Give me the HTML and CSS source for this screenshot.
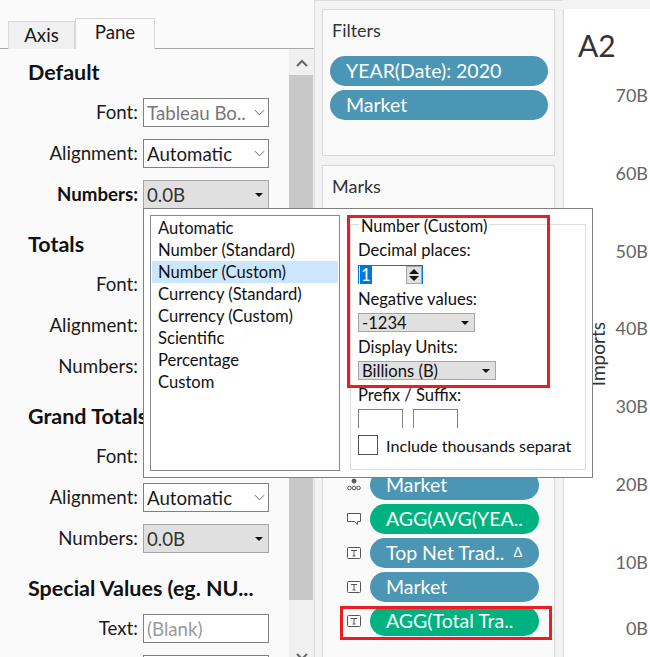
FILE: index.html
```html
<!DOCTYPE html>
<html lang="en">
<head>
  <meta charset="UTF-8" />
  <meta name="viewport" content="width=device-width, initial-scale=1.0" />
  <title>Format Pane</title>
  <link rel="stylesheet" href="styles.css">
</head>
<body>
  <aside class="pane">
    <div class="tabs">
      <div class="tab">Axis</div>
      <div class="tab tab-active">Pane</div>
    </div>
    <div class="pane-body">
      <div class="pane-form">
        <section class="group">
          <h2>Default</h2>
          <div class="row"><span class="row-label">Font:</span><div class="field field-muted">Tableau Bo..<svg class="chev" viewBox="0 0 12 7"><path d="M1 1l5 5 5-5"/></svg></div></div>
          <div class="row"><span class="row-label">Alignment:</span><div class="field">Automatic<svg class="chev" viewBox="0 0 12 7"><path d="M1 1l5 5 5-5"/></svg></div></div>
          <div class="row"><span class="row-label row-bold">Numbers:</span><div class="field field-combo">0.0B<i class="caret"></i></div></div>
        </section>
        <section class="group">
          <h2>Totals</h2>
          <div class="row"><span class="row-label">Font:</span><div class="field"></div></div>
          <div class="row"><span class="row-label">Alignment:</span><div class="field"></div></div>
          <div class="row"><span class="row-label">Numbers:</span><div class="field field-combo"></div></div>
        </section>
        <section class="group">
          <h2>Grand Totals</h2>
          <div class="row"><span class="row-label">Font:</span><div class="field"></div></div>
          <div class="row"><span class="row-label">Alignment:</span><div class="field">Automatic<svg class="chev" viewBox="0 0 12 7"><path d="M1 1l5 5 5-5"/></svg></div></div>
          <div class="row"><span class="row-label">Numbers:</span><div class="field field-combo">0.0B<i class="caret"></i></div></div>
        </section>
        <section class="group">
          <h2>Special Values (eg. NU...</h2>
          <div class="row"><span class="row-label">Text:</span><div class="field field-hint">(Blank)</div></div>
          <div class="row"><span class="row-label"></span><div class="field"></div></div>
        </section>
      </div>
      <div class="scrollbar">
        <svg class="scroll-arrow" viewBox="0 0 12 8"><path d="M1 7l5-5 5 5"/></svg>
        <div class="scroll-thumb"></div>
        <svg class="scroll-arrow" viewBox="0 0 12 8"><path d="M1 1l5 5 5-5"/></svg>
      </div>
    </div>
  </aside>

  <div class="cards">
    <section class="card card-filters">
      <h3>Filters</h3>
      <div class="pill pill-wide">YEAR(Date): 2020</div>
      <div class="pill pill-wide">Market</div>
    </section>
    <section class="card card-marks">
      <h3>Marks</h3>
      <div class="mark-list">
        <div class="mark-row">
          <svg class="mark-icon" viewBox="0 0 14 14"><circle cx="7" cy="3" r="2" fill="#555"/><circle cx="2.5" cy="10" r="1.8"/><circle cx="7" cy="10" r="1.8"/><circle cx="11.5" cy="10" r="1.8"/></svg>
          <div class="pill">Market</div>
        </div>
        <div class="mark-row">
          <svg class="mark-icon" viewBox="0 0 14 14"><path d="M.5 1.5h13v8h-3v3l-3-3h-7z"/></svg>
          <div class="pill pill-green">AGG(AVG(YEA..</div>
        </div>
        <div class="mark-row">
          <svg class="mark-icon" viewBox="0 0 14 14"><rect x=".5" y="1.5" width="13" height="11" rx="1"/><path d="M4 4.5h6M7 4.5v5.5M5.5 10h3"/></svg>
          <div class="pill">Top Net Trad..<span class="delta">Δ</span></div>
        </div>
        <div class="mark-row">
          <svg class="mark-icon" viewBox="0 0 14 14"><rect x=".5" y="1.5" width="13" height="11" rx="1"/><path d="M4 4.5h6M7 4.5v5.5M5.5 10h3"/></svg>
          <div class="pill">Market</div>
        </div>
        <div class="mark-row">
          <svg class="mark-icon" viewBox="0 0 14 14"><rect x=".5" y="1.5" width="13" height="11" rx="1"/><path d="M4 4.5h6M7 4.5v5.5M5.5 10h3"/></svg>
          <div class="pill pill-green">AGG(Total Tra..</div>
          <div class="callout callout-row"></div>
        </div>
      </div>
    </section>
  </div>

  <main class="viz">
    <div class="viz-title">A2</div>
    <div class="axis">
      <span>70B</span>
      <span>60B</span>
      <span>50B</span>
      <span>40B</span>
      <span>30B</span>
      <span>20B</span>
      <span>10B</span>
      <span class="axis-zero">0B</span>
    </div>
    <div class="axis-title">Imports</div>
  </main>

  <div class="popup">
    <ul class="format-list">
      <li>Automatic</li>
      <li>Number (Standard)</li>
      <li class="selected">Number (Custom)</li>
      <li>Currency (Standard)</li>
      <li>Currency (Custom)</li>
      <li>Scientific</li>
      <li>Percentage</li>
      <li>Custom</li>
    </ul>
    <fieldset class="format-opts">
      <legend>Number (Custom)</legend>
      <div class="opt-label opt-first">Decimal places:</div>
      <div class="spin">
        <span class="spin-value">1</span>
        <div class="spin-btns"><i class="tri-up"></i><i class="tri-down"></i></div>
      </div>
      <div class="opt-label">Negative values:</div>
      <div class="mini-combo mini-neg">-1234<i class="caret"></i></div>
      <div class="opt-label">Display Units:</div>
      <div class="mini-combo mini-units">Billions (B)<i class="caret"></i></div>
      <div class="opt-label">Prefix / Suffix:</div>
      <div class="affix"><div class="affix-box"></div><div class="affix-box"></div></div>
      <div class="check-row"><span class="check"></span><span class="check-text">Include thousands separat</span></div>
    </fieldset>
    <div class="callout callout-opts"></div>
  </div>
</body>
</html>
```

FILE: styles.css
```css
* {
  box-sizing: border-box;
}
body {
  margin: 0;
  width: 650px;
  height: 657px;
  overflow: hidden;
  display: flex;
  position: relative;
  background-color: #f3f3f3;
  color: #1a1a1a;
  font-family: Lato, 'Open Sans', sans-serif;
  font-size: 18.7px;
}

/* left format pane */
.pane {
  width: 315px;
  height: 657px;
  flex: none;
  background-color: #fafafa;
  border-right: 1px solid #dcdcdc;
  display: flex;
  flex-direction: column;
}
.tabs {
  height: 49px;
  flex: none;
  padding: 18px 0 0 8px;
  display: flex;
  align-items: flex-end;
  border-bottom: 1px solid #a8a8a8;
}
.tab {
  width: 67px;
  height: 28px;
  margin-bottom: -1px;
  text-align: center;
  line-height: 27px;
  background-color: #f0f0f0;
  border: 1px solid #d9d9d9;
  border-bottom: none;
}
.tab-active {
  width: 80px;
  height: 31px;
  line-height: 26px;
  background-color: #fafafa;
}
.pane-body {
  flex: 1;
  min-height: 0;
  display: flex;
  overflow: hidden;
}
.pane-form {
  width: 289px;
  padding: 9px 0 0 28px;
}
.group {
  margin-bottom: 21px;
}
h2 {
  margin: 0 0 10px;
  height: 30px;
  line-height: 28px;
  font-size: 21.5px;
  font-weight: 700;
  color: #111;
  white-space: nowrap;
}
.row {
  height: 29px;
  margin: 0 0 12px -28px;
  display: flex;
  align-items: center;
}
.row-label {
  width: 138px;
  margin-right: 5px;
  margin-top: -2px;
  text-align: right;
}
.row-bold {
  font-weight: 700;
  color: #111;
}
.field {
  width: 126px;
  height: 29px;
  padding-left: 3px;
  display: flex;
  align-items: center;
  justify-content: space-between;
  background-color: #fff;
  border: 1px solid #808080;
  white-space: nowrap;
}
.field-muted {
  color: #777;
}
.field-hint {
  color: #9a9a9a;
}
.field-combo {
  background-color: #e0e0e0;
  border-color: #a6a6a6;
  color: #333;
}
.chev {
  width: 11px;
  height: 7px;
  margin-right: 3px;
  flex: none;
  fill: none;
  stroke: #555;
  stroke-width: 1;
}
.caret {
  display: block;
  width: 0;
  height: 0;
  margin-right: 5px;
  border-left: 4px solid transparent;
  border-right: 4px solid transparent;
  border-top: 4px solid #111;
}
.scrollbar {
  width: 25px;
  background-color: #f0f0f0;
  display: flex;
  flex-direction: column;
  align-items: center;
}
.scroll-thumb {
  width: 24px;
  height: 525px;
  margin: 0 1px 0 0;
  flex: none;
  background-color: #c8c8c8;
}
.scroll-arrow {
  width: 12px;
  height: 8px;
  margin: 10px 0 8px;
  flex: none;
  fill: none;
  stroke: #666;
  stroke-width: 2;
}
.scroll-thumb + .scroll-arrow {
  margin-top: 53px;
}

/* filters and marks */
.cards {
  width: 248px;
  flex: none;
  padding: 9px 8px 0 7px;
  border-top: 1px solid #dcdcdc;
}
.card {
  background-color: #fafafa;
  border: 1px solid #d8d8d8;
}
.card-filters {
  height: 147px;
  margin: -1px 0 9px;
  padding: 0 6px;
}
.card-marks {
  height: 500px;
  padding: 0 6px;
}
h3 {
  margin: 0;
  padding-left: 3px;
  height: 46px;
  line-height: 41px;
  font-size: 18px;
  font-weight: 400;
  color: #333;
}
.pill {
  height: 30px;
  width: 169px;
  padding: 0 0 2px 16px;
  display: flex;
  align-items: center;
  border-radius: 15px;
  background-color: #4b96b5;
  color: #fff;
  font-size: 19.5px;
  white-space: nowrap;
}
.pill-wide {
  width: 218px;
  margin: 0 0 4px 1px;
}
.pill-green {
  background-color: #00b27f;
}
.delta {
  margin-left: 9px;
  font-size: 13px;
}
.mark-list {
  margin-top: 258px;
  display: flex;
  flex-direction: column;
  gap: 4px;
  margin-left: 18px;
}
.mark-row {
  display: flex;
  align-items: center;
  gap: 9px;
  position: relative;
}
.mark-icon {
  width: 14px;
  height: 14px;
  flex: none;
  fill: #fff;
  stroke: #555;
  stroke-width: 1;
}

/* chart */
.viz {
  flex: 1;
  margin-top: 9px;
  background-color: #fff;
  border-left: 1px solid #d8d8d8;
  position: relative;
}
.viz-title {
  padding: 18px 0 0 14px;
  font-size: 30px;
  line-height: 36px;
  color: #333;
}
.axis {
  margin-top: 21px;
  padding-right: 2px;
  display: flex;
  flex-direction: column;
  align-items: flex-end;
  gap: 55.8px;
  color: #666;
  font-size: 18px;
  line-height: 22px;
}
.axis-zero {
  margin-top: -12px;
}
.axis-title {
  position: absolute;
  left: 25px;
  top: 313px;
  writing-mode: vertical-rl;
  transform: rotate(180deg);
  color: #333;
  font-size: 19px;
  line-height: 18px;
}

/* number format popup */
.popup {
  position: absolute;
  left: 143px;
  top: 208px;
  width: 450px;
  height: 270px;
  padding: 6px;
  display: flex;
  gap: 10px;
  background-color: #fff;
  border: 1px solid #808080;
  font-size: 16.6px;
  color: #111;
}
.format-list {
  width: 190px;
  height: 256px;
  margin: 0;
  padding: 1px;
  list-style: none;
  flex: none;
  border: 1px solid #888;
}
.format-list li {
  height: 22px;
  line-height: 22px;
  padding-left: 6px;
}
.format-list .selected {
  background-color: #cde6ff;
}
.format-opts {
  width: 236px;
  height: 255px;
  margin: 0;
  padding: 0 0 0 7px;
  border: 1px solid #dcdcdc;
  min-width: 0;
}
.format-opts legend {
  margin-left: 1px;
  padding: 0 2px;
  height: 18px;
  line-height: 21px;
  font-size: 16.4px;
}
.opt-label {
  height: 22px;
  line-height: 22px;
}
.opt-first {
  margin-top: 6px;
}
.spin {
  width: 65px;
  height: 19px;
  margin: 4px 0;
  padding: 0 0 0 1px;
  display: flex;
  justify-content: space-between;
  border: 1px solid #0078d7;
  border-bottom: none;
}
.spin-value {
  height: 18px;
  line-height: 18px;
  padding: 0 1px;
  background-color: #0078d7;
  color: #fff;
}
.spin-btns {
  width: 16px;
  height: 18px;
  display: flex;
  flex-direction: column;
  align-items: center;
  justify-content: center;
  gap: 2px;
  background-color: #e0e0e0;
  border: 1px solid #a6a6a6;
}
.tri-up, .tri-down {
  display: block;
  width: 0;
  height: 0;
  border-left: 5px solid transparent;
  border-right: 5px solid transparent;
}
.tri-up {
  border-bottom: 5px solid #111;
}
.tri-down {
  border-top: 5px solid #111;
}
.mini-combo {
  height: 19px;
  margin: 3px 0 4px;
  padding-left: 3px;
  display: flex;
  align-items: center;
  justify-content: space-between;
  background-color: #e0e0e0;
  border: 1px solid #a6a6a6;
}
.mini-neg {
  width: 117px;
}
.mini-units {
  width: 138px;
}
.affix {
  margin-top: 3px;
  display: flex;
  gap: 10px;
}
.affix-box {
  width: 45px;
  height: 19px;
  border: 1px solid #808080;
  border-bottom: none;
}
.check-row {
  margin-top: 7px;
  display: flex;
  align-items: center;
  gap: 8px;
  white-space: nowrap;
}
.check {
  width: 20px;
  height: 20px;
  flex: none;
  border: 1px solid #555;
}
.check-text {
  font-size: 16.2px;
}

/* red annotation boxes */
.callout {
  position: absolute;
  border: 3px solid #ed1c24;
  pointer-events: none;
}
.callout-opts {
  left: 203px;
  top: 6px;
  width: 203px;
  height: 173px;
}
.callout-row {
  left: -7px;
  top: 0;
  width: 212px;
  height: 34px;
}
```
